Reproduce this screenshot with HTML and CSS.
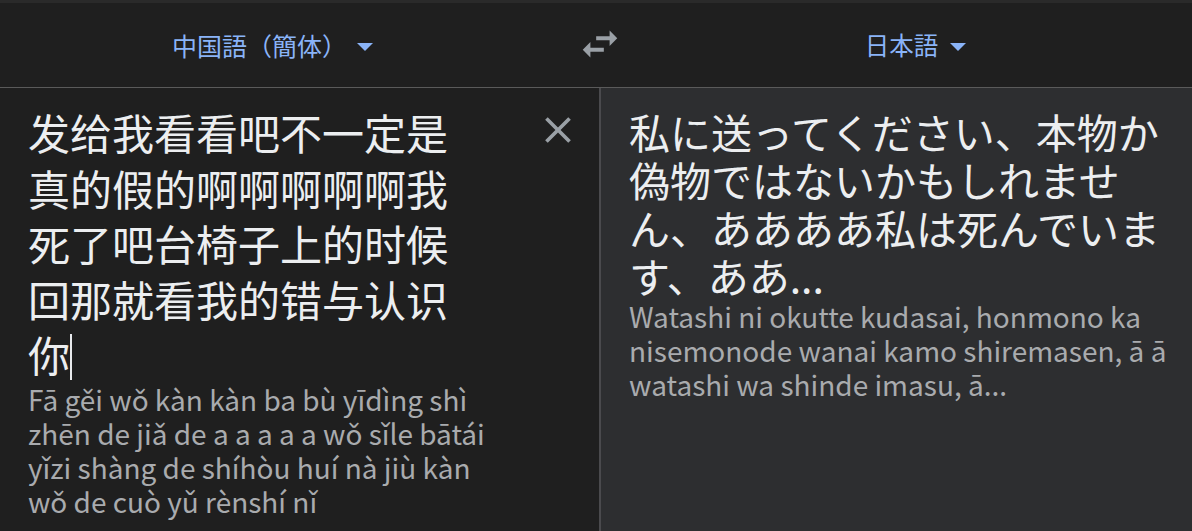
FILE: index.html
```html
<!DOCTYPE html>
<html lang="ja">
<head>
<meta charset="utf-8">
<title>翻訳</title>
<link rel="stylesheet" href="styles.css">
</head>
<body>
<div class="app">
  <div class="topstrip"></div>
  <header class="header">
    <button class="lang lang-src"><span class="lang-name">中国語（簡体）</span><span class="caret"></span></button>
    <button class="swap" aria-label="swap">
      <svg viewBox="0 0 24 24" width="46" height="46"><path fill="#9aa0a6" d="M6.99 11L3 15l3.99 4v-3H14v-2H6.99v-3zM21 9l-3.99-4v3H10v2h7.01v3L21 9z"/></svg>
    </button>
    <button class="lang lang-dst"><span class="lang-name">日本語</span><span class="caret"></span></button>
  </header>
  <main class="panels">
    <section class="panel panel-src">
      <div class="src-row">
        <div class="src-text">发给我看看吧不一定是<br>真的假的啊啊啊啊啊我<br>死了吧台椅子上的时候<br>回那就看我的错与认识<br>你<span class="cursor"></span></div>
        <button class="clear" aria-label="clear">
          <svg viewBox="0 0 24 24" width="44" height="44"><path fill="#9aa0a6" d="M19 6.41L17.59 5 12 10.59 6.41 5 5 6.41 10.59 12 5 17.59 6.41 19 12 13.41 17.59 19 19 17.59 13.41 12z"/></svg>
        </button>
      </div>
      <div class="roman">Fā gěi wǒ kàn kàn ba bù yīdìng shì<br>zhēn de jiǎ de a a a a a wǒ sǐle bātái<br>yǐzi shàng de shíhòu huí nà jiù kàn<br>wǒ de cuò yǔ rènshí nǐ</div>
    </section>
    <section class="panel panel-dst">
      <div class="dst-text">私に送ってください、本物か<br>偽物ではないかもしれませ<br>ん、ああああ私は死んでいま<br>す、ああ...</div>
      <div class="roman">Watashi ni okutte kudasai, honmono ka<br>nisemonode wanai kamo shiremasen, ā ā<br>watashi wa shinde imasu, ā...</div>
    </section>
  </main>
</div>
</body>
</html>
```
FILE: styles.css
```css
html, body {
  margin: 0;
  padding: 0;
  background: #1f1f1f;
}
body {
  width: 1192px;
  height: 531px;
  overflow: hidden;
  font-family: "Noto Sans CJK JP", "Noto Sans", sans-serif;
}
.app {
  display: flex;
  flex-direction: column;
  height: 531px;
}
.topstrip {
  height: 3px;
  background: #2a2a2a;
}
.header {
  height: 84px;
  display: grid;
  grid-template-columns: 545px 110px 1fr;
  align-items: center;
  border-bottom: 1px solid #5a5a5a;
  background: #1f1f1f;
}
button {
  background: none;
  border: none;
  padding: 0;
  margin: 0;
  cursor: pointer;
  font-family: inherit;
}
.lang {
  display: flex;
  align-items: center;
  justify-content: center;
  color: #8ab4f8;
  font-size: 24.5px;
  height: 100%;
}
.lang-src {
  gap: 10px;
  font-size: 25px;
}
.lang-name {
  line-height: 30px;
}
.caret {
  width: 0;
  height: 0;
  border-left: 8px solid transparent;
  border-right: 8px solid transparent;
  border-top: 8px solid #8ab4f8;
  margin-top: 3px;
}
.lang-dst {
  gap: 12px;
  padding-right: 16px;
}
.swap {
  display: flex;
  align-items: center;
  justify-content: center;
  margin-top: -3px;
}
.panels {
  flex: 1;
  display: flex;
}
.panel {
  box-sizing: border-box;
}
.panel-src {
  width: 599px;
  background: #1f1f1f;
  padding: 16px 0 0 28px;
}
.panel-dst {
  flex: 1;
  background: #2d2e30;
  border-left: 2px solid #4a4a4d;
  padding: 19px 0 0 28px;
}
.src-row {
  display: flex;
  justify-content: space-between;
}
.src-text {
  font-family: "Noto Sans CJK SC", sans-serif;
  color: #eceef0;
  font-size: 42px;
  line-height: 55.5px;
}
.cursor {
  display: inline-block;
  width: 2px;
  height: 46px;
  background: #e8eaed;
  vertical-align: -8px;
}
.clear {
  width: 44px;
  height: 44px;
  margin: 4px 19px 0 0;
}
.dst-text {
  font-family: "Noto Sans CJK JP", sans-serif;
  color: #eceef0;
  font-size: 41px;
  line-height: 48px;
}
.roman {
  font-family: "Noto Sans CJK JP", sans-serif;
  color: #a9abae;
  font-size: 28px;
  line-height: 34px;
}
```
